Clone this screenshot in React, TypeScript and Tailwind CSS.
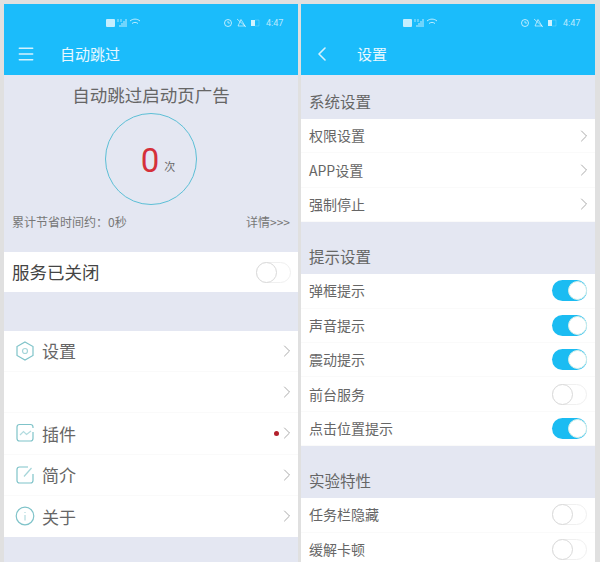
import { ChevronLeft, ChevronRight, Menu } from 'lucide-react';

const font = { cn: 'font-["Noto_Sans_CJK_SC","Noto_Sans",sans-serif]' };

function StatusBar() {
  return (
    <div className="h-[25px] relative text-white/70">
      <svg className="absolute left-[99px] top-[13px]" width="40" height="12" viewBox="0 0 40 12" fill="none">
        <rect x="3" y="2" width="9" height="8" rx="1" fill="#ffffff" fillOpacity="0.75" />
        <path d="M15 5V2M18 5V2" stroke="#fff" strokeOpacity="0.6" />
        <path d="M17 10V8M19 10V6M21 10V4M23 10V2" stroke="#fff" strokeOpacity="0.75" />
        <path d="M27 4C30 1.5 34 1.5 37 4M29 6.5C31 5 33 5 35 6.5M32 9.5V9.5" stroke="#fff" strokeOpacity="0.7" />
      </svg>
      <svg className="absolute left-[217px] top-[13px]" width="42" height="12" viewBox="0 0 42 12" fill="none">
        <circle cx="7" cy="6" r="3.5" stroke="#fff" strokeOpacity="0.7" />
        <path d="M7 4V6H9" stroke="#fff" strokeOpacity="0.6" />
        <path d="M20 2.500L17 9H24ZM16 2L25 10" stroke="#fff" strokeOpacity="0.6" />
        <rect x="30" y="3" width="4" height="6" fill="#fff" fillOpacity="0.8" />
        <path d="M34 3H38V9H34" stroke="#fff" strokeOpacity="0.2" />
      </svg>
      <span className="absolute left-[262px] top-[13px] text-[9px] leading-3 font-['Roboto',sans-serif]">4:47</span>
    </div>
  );
}

function Toggle({ on }: { on?: boolean }) {
  if (on) {
    return (
      <div className="w-[35px] h-[21px] rounded-full bg-[#1bbcf2] flex justify-end items-center">
        <div className="w-[19px] h-[19px] rounded-full bg-white border border-[#d8efe9]" />
      </div>
    );
  }
  return (
    <div className="w-[35px] h-[21px] rounded-full bg-white border border-[#f0f0f0] flex items-center">
      <div className="w-[21px] h-[21px] -ml-px rounded-full bg-white border border-[#d9d9d9]" />
    </div>
  );
}

function Arrow() {
  return <ChevronRight size={20} strokeWidth={1} className="text-[#9a9a9a] -mr-[7px]" />;
}

function SettingRow({ label, on, arrow }: { label: string; on?: boolean; arrow?: boolean }) {
  return (
    <div className="h-[34.4px] flex items-center justify-between pl-2 pr-[8px] border-b border-[#fafafa] bg-white">
      <span className="text-[14px] text-[#666]">{label}</span>
      {arrow ? <Arrow /> : <Toggle on={on} />}
    </div>
  );
}

function GroupTitle({ label, big }: { label: string; big?: boolean }) {
  return (
    <div className={`${big ? 'h-[52px]' : 'h-11'} flex items-end pb-[8px] pl-2 bg-[#e4e7f2]`}>
      <span className="text-[15.5px] leading-[20px] text-[#666]">{label}</span>
    </div>
  );
}

function HexIcon() {
  return (
    <svg width="20" height="20" viewBox="0 0 20 20" fill="none" stroke="#7fc3c9" strokeWidth="1.2">
      <path d="M10 1L18 5.500V14.500L10 19L2 14.500V5.500Z" />
      <circle cx="10" cy="10" r="2.500" strokeOpacity="0.7" />
    </svg>
  );
}

function ChartIcon() {
  return (
    <svg width="20" height="20" viewBox="0 0 20 20" fill="none" stroke="#7fc3c9" strokeWidth="1.200">
      <path d="M18 5V4C18 2.500 17 1.500 15.500 1.500H4.500C3 1.500 2 2.500 2 4V15.500C2 17 3 18 4.500 18H15.500C17 18 18 17 18 15.500V9" />
      <path d="M5 12L8.500 8.500L11.500 11.500L16 8" strokeOpacity="0.6" />
    </svg>
  );
}

function EditIcon() {
  return (
    <svg width="20" height="20" viewBox="0 0 20 20" fill="none" stroke="#7fc3c9" strokeWidth="1.200">
      <path d="M18 9V15.500C18 17 17 18 15.500 18H4.500C3 18 2 17 2 15.500V4.500C2 3 3 2 4.500 2H13" />
      <path d="M9 11.500L16.500 3" strokeOpacity="0.7" />
    </svg>
  );
}

function InfoIcon() {
  return (
    <svg width="20" height="20" viewBox="0 0 20 20" fill="none" stroke="#7fc3c9" strokeWidth="1.200">
      <circle cx="10" cy="10" r="8.800" />
      <path d="M10 6V7M10 9V14.500" strokeOpacity="0.6" />
    </svg>
  );
}

function MenuRow({ icon, label, dot }: { icon?: React.ReactNode; label?: string; dot?: boolean }) {
  return (
    <div className="h-[41.2px] flex items-center pl-[10px] pr-[8px] border-b border-[#fafafa] last:border-b-0">
      <div className="w-[22px] flex justify-center">{icon}</div>
      <span className="ml-[6px] text-[17px] text-[#666] flex-1">{label}</span>
      {dot && <div className="w-[5px] h-[5px] rounded-full bg-[#b3202c] -mr-[2px]" />}
      <Arrow />
    </div>
  );
}

export default function App() {
  return (
    <div className={`w-[600px] h-[562px] overflow-hidden bg-[#e0e0e0] flex gap-[3px] pt-1 pl-1 ${font.cn}`}>
      {/* left screen */}
      <div className="w-[294px] shrink-0 bg-[#e4e7f2]">
        <div className="h-[71px] bg-[#1bbcfb]">
          <StatusBar />
          <div className="h-[46px] flex items-center pl-[12px] pt-[6px] text-white/90 -mt-[1px]">
            <Menu size={20} strokeWidth={1.8} className="opacity-90" />
            <span className="ml-[24px] text-[15px]">自动跳过</span>
          </div>
        </div>

        <div className="h-[177px] flex flex-col items-center">
          <div className="mt-[7px] text-[17.5px] leading-[26px] text-[#666] text-center">自动跳过启动页广告</div>
          <div className="mt-[5px] w-[92px] h-[92px] rounded-full border border-[#5cbfd6] flex items-center justify-center">
            <span className="text-[33px] leading-none text-[#d5303a] font-['Roboto',sans-serif] ml-[14px] mt-[3px]">0</span>
            <span className="text-[11px] text-[#666] ml-[5px] mt-[14px]">次</span>
          </div>
          <div className="w-full mt-[8px] px-2 flex justify-between items-center text-[12px] text-[#777]">
            <span>累计节省时间约：0秒</span>
            <span>详情&gt;&gt;&gt;</span>
          </div>
        </div>

        <div className="h-[40px] bg-white flex items-center justify-between pl-2 pr-[7px]">
          <span className="text-[17.5px] text-[#444]">服务已关闭</span>
          <Toggle />
        </div>

        <div className="h-[39px]" />

        <div className="bg-white">
          <MenuRow icon={<HexIcon />} label="设置" />
          <MenuRow />
          <MenuRow icon={<ChartIcon />} label="插件" dot />
          <MenuRow icon={<EditIcon />} label="简介" />
          <MenuRow icon={<InfoIcon />} label="关于" />
        </div>
      </div>

      {/* right screen */}
      <div className="w-[294px] shrink-0 bg-[#e4e7f2]">
        <div className="h-[71px] bg-[#1bbcfb]">
          <StatusBar />
          <div className="h-[46px] flex items-center pl-[9px] pt-[6px] text-white/90 -mt-[1px]">
            <ChevronLeft size={24} strokeWidth={1.6} className="opacity-90" />
            <span className="ml-[23px] text-[15px]">设置</span>
          </div>
        </div>

        <GroupTitle label="系统设置" />
        <SettingRow label="权限设置" arrow />
        <SettingRow label="APP设置" arrow />
        <SettingRow label="强制停止" arrow />

        <GroupTitle label="提示设置" big />
        <SettingRow label="弹框提示" on />
        <SettingRow label="声音提示" on />
        <SettingRow label="震动提示" on />
        <SettingRow label="前台服务" />
        <SettingRow label="点击位置提示" on />

        <GroupTitle label="实验特性" big />
        <SettingRow label="任务栏隐藏" />
        <SettingRow label="缓解卡顿" />
      </div>
    </div>
  );
}
